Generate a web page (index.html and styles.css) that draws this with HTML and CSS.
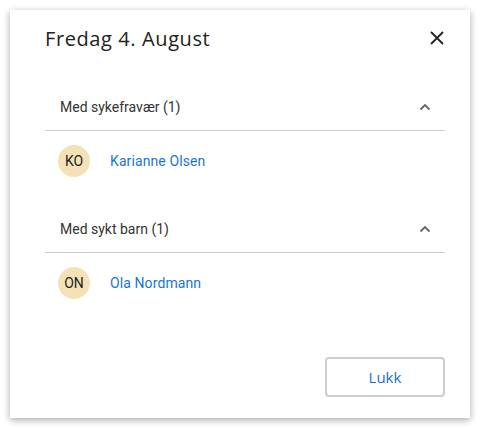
FILE: index.html
```html
<!DOCTYPE html>
<html lang="no">
<head>
<meta charset="utf-8">
<link rel="stylesheet" href="styles.css">
</head>
<body>
<div class="dialog">
  <div class="dialog-head">
    <h1 class="title">Fredag 4. August</h1>
    <button class="close" aria-label="Lukk">
      <svg width="14" height="14" viewBox="0 0 14 14"><path d="M1 1L13 13M13 1L1 13" stroke="#222" stroke-width="1.8" fill="none"/></svg>
    </button>
  </div>
  <div class="sections">
    <section class="section">
      <div class="section-head">
        <span>Med sykefravær (1)</span>
        <svg class="chev" width="12" height="8" viewBox="0 0 12 8"><path d="M1.5 6.5L6 2L10.5 6.5" stroke="#666" stroke-width="1.8" fill="none"/></svg>
      </div>
      <div class="item">
        <span class="avatar">KO</span>
        <a class="name">Karianne Olsen</a>
      </div>
    </section>
    <section class="section">
      <div class="section-head">
        <span>Med sykt barn (1)</span>
        <svg class="chev" width="12" height="8" viewBox="0 0 12 8"><path d="M1.5 6.5L6 2L10.5 6.5" stroke="#666" stroke-width="1.8" fill="none"/></svg>
      </div>
      <div class="item">
        <span class="avatar">ON</span>
        <a class="name">Ola Nordmann</a>
      </div>
    </section>
  </div>
  <div class="actions">
    <button class="btn">Lukk</button>
  </div>
</div>
</body>
</html>
```
FILE: styles.css
```css
* { box-sizing: border-box; }
html, body { margin: 0; background: #fff; }
body { padding: 10px; font-family: Roboto, "Noto Sans", sans-serif; color: #333; }
.dialog {
  width: 460px;
  height: 408px;
  background: #fff;
  box-shadow: 0 2px 7px rgba(0,0,0,0.35);
  padding: 0 25px 0 35px;
  display: flex;
  flex-direction: column;
}
.dialog-head {
  display: flex;
  align-items: center;
  justify-content: space-between;
  height: 56px;
  padding-top: 0;
}
.title {
  margin: 0;
  font-family: "Open Sans", sans-serif;
  font-weight: 400;
  font-size: 20px;
  color: #222;
  letter-spacing: 0.6px;
}
.close {
  border: 0; background: none; padding: 0; width: 14px; height: 14px;
  display: flex; margin-right: 1px;
}
.sections { padding-top: 17px; width: 400px; }
.section { margin-bottom: 14px; }
.section-head {
  height: 48px;
  padding: 0 14px 0 15px;
  display: flex;
  align-items: center;
  justify-content: space-between;
  font-size: 14px;
  color: #333;
  border-bottom: 1px solid #ccc;
}
.chev { display: block; }
.item {
  height: 60px;
  display: flex;
  align-items: center;
  padding-left: 13px;
  gap: 20px;
}
.avatar {
  width: 32px; height: 32px; border-radius: 50%;
  background: #f5e1b6;
  display: flex; align-items: center; justify-content: center;
  font-size: 14px; color: #222;
}
.name { font-size: 14px; color: #1a76d2; text-decoration: none; letter-spacing: 0.1px; }
.actions {
  margin-top: auto;
  width: 400px;
  display: flex;
  justify-content: flex-end;
  padding-bottom: 21px;
}
.btn {
  width: 120px; height: 40px;
  border: 2px solid #cdcdcd; border-radius: 4px; background: #fff;
  font-family: "Open Sans", sans-serif; font-size: 15px; color: #1a6fd0;
}
```
